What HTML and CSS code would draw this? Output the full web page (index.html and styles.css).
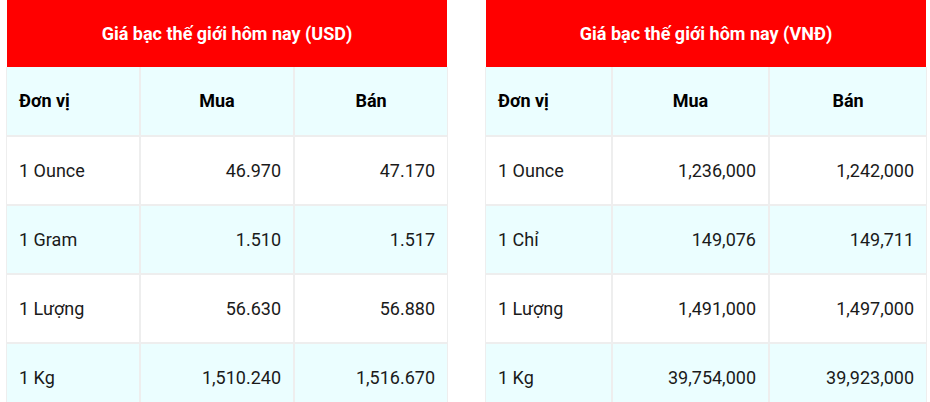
FILE: index.html
```html
<!DOCTYPE html>
<html lang="vi">
<head>
<meta charset="utf-8">
<title>Giá bạc thế giới hôm nay</title>
<link rel="stylesheet" href="styles.css">
</head>
<body>
<div class="wrap">
  <table class="price usd">
    <colgroup><col class="c1"><col class="c2"><col class="c3"></colgroup>
    <thead>
      <tr><th class="title" colspan="3">Giá bạc thế giới hôm nay (USD)</th></tr>
      <tr class="head"><th class="unit">Đơn vị</th><th>Mua</th><th>Bán</th></tr>
    </thead>
    <tbody>
      <tr><td>1 Ounce</td><td class="num">46.970</td><td class="num">47.170</td></tr>
      <tr class="alt"><td>1 Gram</td><td class="num">1.510</td><td class="num">1.517</td></tr>
      <tr><td>1 Lượng</td><td class="num">56.630</td><td class="num">56.880</td></tr>
      <tr class="alt"><td>1 Kg</td><td class="num">1,510.240</td><td class="num">1,516.670</td></tr>
    </tbody>
  </table>
  <table class="price vnd">
    <colgroup><col class="c1"><col class="c2"><col class="c3"></colgroup>
    <thead>
      <tr><th class="title" colspan="3">Giá bạc thế giới hôm nay (VNĐ)</th></tr>
      <tr class="head"><th class="unit">Đơn vị</th><th>Mua</th><th>Bán</th></tr>
    </thead>
    <tbody>
      <tr><td>1 Ounce</td><td class="num">1,236,000</td><td class="num">1,242,000</td></tr>
      <tr class="alt"><td>1 Chỉ</td><td class="num">149,076</td><td class="num">149,711</td></tr>
      <tr><td>1 Lượng</td><td class="num">1,491,000</td><td class="num">1,497,000</td></tr>
      <tr class="alt"><td>1 Kg</td><td class="num">39,754,000</td><td class="num">39,923,000</td></tr>
    </tbody>
  </table>
</div>
</body>
</html>
```
FILE: styles.css
```css
html, body {
  margin: 0;
  padding: 0;
  background: #fff;
}
body {
  font-family: Roboto, "Liberation Sans", Arial, sans-serif;
  color: #1a1a1a;
}
.wrap {
  display: flex;
  align-items: flex-start;
  gap: 37px;
  padding: 0 6px;
}
.price {
  border-collapse: separate;
  border-spacing: 0;
  table-layout: fixed;
  width: 442px;
  flex: none;
}
.usd .c1 { width: 134px; }
.usd .c2 { width: 154px; }
.usd .c3 { width: 154px; }
.vnd .c1 { width: 127px; }
.vnd .c2 { width: 157px; }
.vnd .c3 { width: 158px; }

.price th,
.price td {
  box-sizing: border-box;
  border: 1px solid #eeeeee;
  padding: 21.5px 12px;
  font-size: 18px;
  line-height: 24px;
  white-space: nowrap;
}
.price .title {
  background: #ff0000;
  background-clip: padding-box;
  color: #fff;
  font-size: 18px;
  font-weight: 700;
  text-align: center;
  border-top: 0;
  border-bottom: 0;
  border-left: 1px solid #fff;
  border-right: 1px solid #fff;
  padding: 21.5px 12px 21.5px;
}
.price .head th {
  background: #ebfeff;
  color: #000;
  font-weight: 700;
  text-align: center;
  border-top: 0;
  padding: 22px 12px 22px;
}
.price .head .unit {
  text-align: left;
}
.price .alt td {
  background: #ebfeff;
}
.price td.num {
  text-align: right;
}
```
